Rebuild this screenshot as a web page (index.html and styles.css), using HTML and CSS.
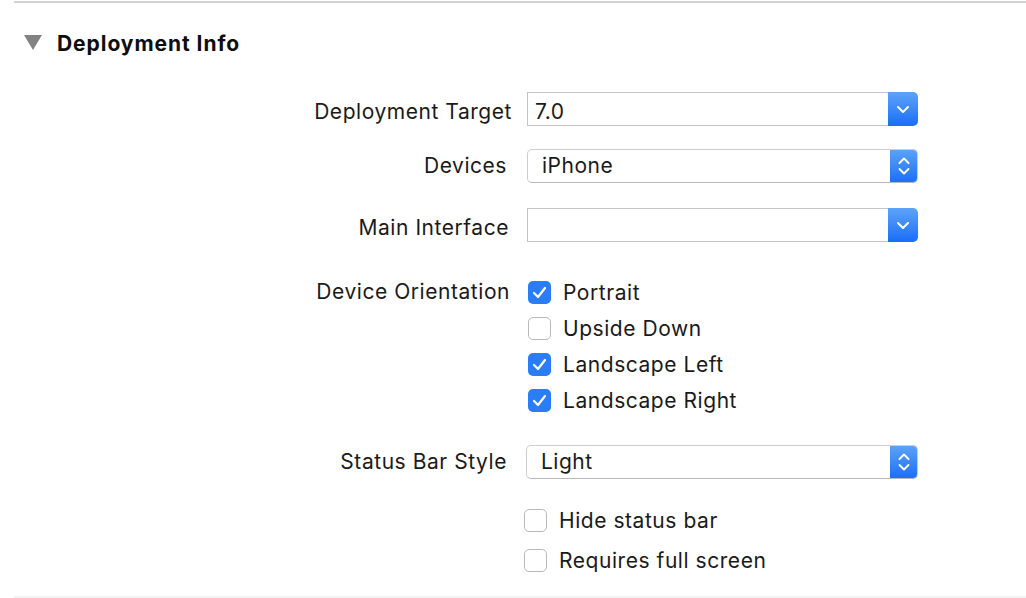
FILE: index.html
```html
<!DOCTYPE html>
<html>
<head>
<meta charset="utf-8">
<link rel="stylesheet" href="styles.css">
</head>
<body>
<div class="top-rule"></div>
<div class="section-header">
  <span class="disclosure"></span>
  <h2 class="section-title">Deployment Info</h2>
</div>
<div class="form">
  <div class="row row-target">
    <div class="label label-combo">Deployment Target</div>
    <div class="combo">
      <div class="combo-field">7.0</div>
      <div class="combo-btn">
        <svg width="14" height="9" viewBox="0 0 14 9"><path d="M2 2 L7 7 L12 2" fill="none" stroke="#fff" stroke-width="2" stroke-linecap="round" stroke-linejoin="round"/></svg>
      </div>
    </div>
  </div>
  <div class="row row-devices">
    <div class="label label-popup">Devices</div>
    <div class="popup">
      <div class="popup-value">iPhone</div>
      <div class="popup-btn">
        <svg width="14" height="24" viewBox="0 0 14 24"><path d="M2.5 9 L7 4.5 L11.5 9 M2.5 15 L7 19.5 L11.5 15" fill="none" stroke="#fff" stroke-width="1.9" stroke-linecap="round" stroke-linejoin="round"/></svg>
      </div>
    </div>
  </div>
  <div class="row row-main">
    <div class="label label-main">Main Interface</div>
    <div class="combo">
      <div class="combo-field"></div>
      <div class="combo-btn">
        <svg width="14" height="9" viewBox="0 0 14 9"><path d="M2 2 L7 7 L12 2" fill="none" stroke="#fff" stroke-width="2" stroke-linecap="round" stroke-linejoin="round"/></svg>
      </div>
    </div>
  </div>
  <div class="row row-orient">
    <div class="label label-orient">Device Orientation</div>
    <div class="check-list">
      <div class="check-item"><span class="checkbox checked"><svg width="15" height="13" viewBox="0 0 15 13"><path d="M2 7 L6 11 L13 2" fill="none" stroke="#fff" stroke-width="2.2" stroke-linecap="round" stroke-linejoin="round"/></svg></span><span class="check-text">Portrait</span></div>
      <div class="check-item"><span class="checkbox"></span><span class="check-text">Upside Down</span></div>
      <div class="check-item"><span class="checkbox checked"><svg width="15" height="13" viewBox="0 0 15 13"><path d="M2 7 L6 11 L13 2" fill="none" stroke="#fff" stroke-width="2.2" stroke-linecap="round" stroke-linejoin="round"/></svg></span><span class="check-text">Landscape Left</span></div>
      <div class="check-item"><span class="checkbox checked"><svg width="15" height="13" viewBox="0 0 15 13"><path d="M2 7 L6 11 L13 2" fill="none" stroke="#fff" stroke-width="2.2" stroke-linecap="round" stroke-linejoin="round"/></svg></span><span class="check-text">Landscape Right</span></div>
    </div>
  </div>
  <div class="row row-status">
    <div class="label label-status">Status Bar Style</div>
    <div class="popup popup-status">
      <div class="popup-value">Light</div>
      <div class="popup-btn">
        <svg width="14" height="24" viewBox="0 0 14 24"><path d="M2.5 9 L7 4.5 L11.5 9 M2.5 15 L7 19.5 L11.5 15" fill="none" stroke="#fff" stroke-width="1.9" stroke-linecap="round" stroke-linejoin="round"/></svg>
      </div>
    </div>
  </div>
  <div class="row row-extra">
    <div class="label label-empty"></div>
    <div class="check-list check-list-extra">
      <div class="check-item"><span class="checkbox"></span><span class="check-text">Hide status bar</span></div>
      <div class="check-item"><span class="checkbox"></span><span class="check-text">Requires full screen</span></div>
    </div>
  </div>
</div>
<div class="bottom-rule"></div>
</body>
</html>
```

FILE: styles.css
```css
html, body {
  margin: 0;
  padding: 0;
  background: #ffffff;
}
body {
  font-family: "Inter", "Liberation Sans", sans-serif;
  color: #1a1a1a;
  width: 1026px;
  height: 598px;
  overflow: hidden;
  display: flex;
  flex-direction: column;
}
.top-rule {
  margin: 1px 0 0 14px;
  height: 2px;
  background: #d2d2d2;
}
.section-header {
  display: flex;
  align-items: center;
  margin-top: 27px;
  padding-left: 24px;
  height: 26px;
}
.disclosure {
  width: 0;
  height: 0;
  border-left: 9px solid transparent;
  border-right: 9px solid transparent;
  border-top: 15px solid #828282;
  margin-right: 15px;
  margin-top: -1px;
}
.section-title {
  margin: 0;
  font-size: 21px;
  font-weight: 700;
  color: #0d0d0d;
  letter-spacing: 0.95px;
}
.form {
  display: flex;
  flex-direction: column;
}
.row {
  display: flex;
  align-items: flex-start;
}
.label {
  text-align: right;
  font-size: 21px;
  letter-spacing: 0.55px;
  line-height: 34px;
  flex: none;
}
.label-combo { width: 512px; margin-right: 15px; padding-top: 3px; }
.label-popup { width: 507px; margin-right: 20px; }
.label-main { width: 509px; margin-right: 18px; padding-top: 3px; }
.label-orient { width: 510px; margin-right: 18px; line-height: 36px; }
.label-status { width: 507px; margin-right: 19px; }
.label-empty { width: 524px; }

.row-target { margin-top: 36px; }
.row-devices { margin-top: 20px; }
.row-main { margin-top: 25px; }
.row-orient { margin-top: 29px; }
.row-status { margin-top: 27px; }
.row-extra { margin-top: 23px; }

.combo {
  width: 391px;
  height: 34px;
  display: flex;
  box-sizing: border-box;
}
.combo-field {
  flex: 1;
  border: 1px solid #c4c4c4;
  border-right: none;
  box-sizing: border-box;
  font-size: 21px;
  letter-spacing: 0.5px;
  line-height: 32px;
  padding-top: 3px;
  padding-left: 7px;
  background: #fff;
}
.combo-btn {
  width: 30px;
  height: 34px;
  border-radius: 0 5px 5px 0;
  background: linear-gradient(#5ea3fa, #1a6ef6);
  display: flex;
  align-items: center;
  justify-content: center;
}
.popup {
  width: 391px;
  height: 34px;
  display: flex;
  border-radius: 5px;
  box-sizing: border-box;
  border: 1px solid #cdcdcd;
  border-bottom-color: #b8b8b8;
  background: #fff;
  overflow: hidden;
}
.popup-status { width: 392px; }
.popup-value {
  flex: 1;
  font-size: 21px;
  letter-spacing: 0.5px;
  line-height: 32px;
  padding-left: 14px;
}
.popup-btn {
  width: 28px;
  margin: -1px -1px -1px 0;
  background: linear-gradient(#5ea3fa, #1a6ef6);
  display: flex;
  align-items: center;
  justify-content: center;
}
.check-list {
  display: flex;
  flex-direction: column;
}
.check-item {
  display: flex;
  align-items: center;
  height: 36px;
}
.check-list-extra {
  gap: 4px;
}
.checkbox {
  width: 23px;
  height: 23px;
  box-sizing: border-box;
  border-radius: 5px;
  border: 1px solid #b9b9b9;
  background: #fff;
  display: flex;
  align-items: center;
  justify-content: center;
  flex: none;
}
.checkbox.checked {
  border: none;
  background: #2b7df6;
}
.check-text {
  font-size: 21px;
  letter-spacing: 0.55px;
  margin-left: 12px;
}
.bottom-rule {
  margin: auto 0 0 14px;
  height: 2px;
  background: #f4f4f4;
}
```
